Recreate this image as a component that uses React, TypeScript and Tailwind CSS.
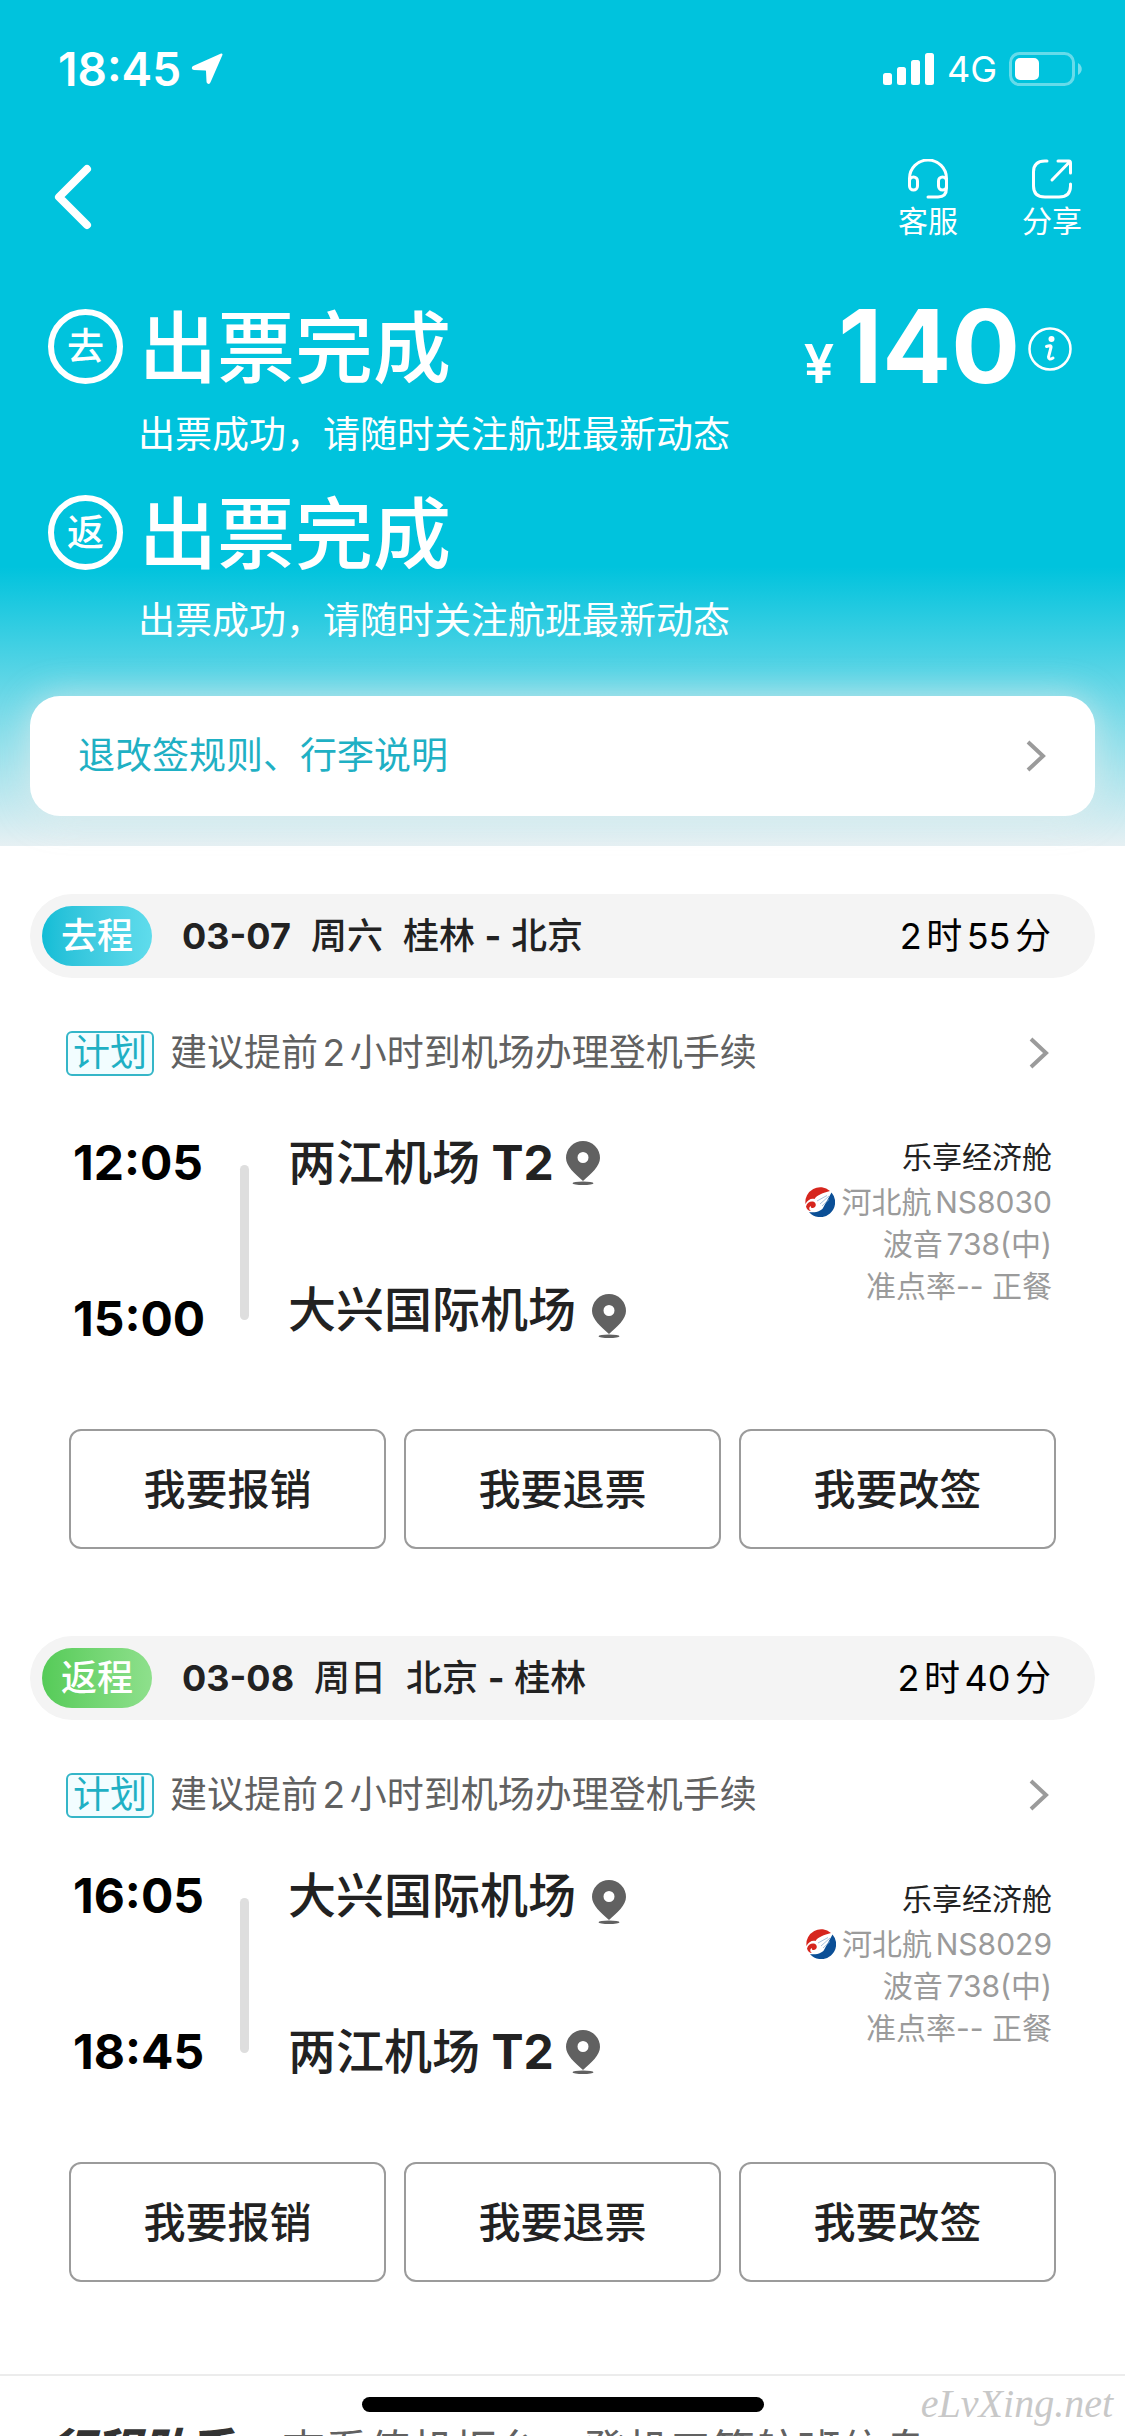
import React from 'react'
import clsx from 'clsx'

interface Airport {
    time: string
    name: string
    terminal?: string
}

interface Leg {
    id: string
    label: string
    badge: string
    date: string
    weekday: string
    cities: string[]
    duration: string
    flight: string
    from: Airport
    to: Airport
}

const LIANGJIANG = { name: '两江机场', terminal: 'T2' }
const DAXING = { name: '大兴国际机场' }

const legs: Leg[] = [
    {
        id: 'go',
        label: '去程',
        badge: 'bg-linear-to-r from-[#10bdd6] to-[#5fdcec]',
        date: '03-07',
        weekday: '周六',
        cities: ['桂林', '北京'],
        duration: '2时55分',
        flight: '河北航NS8030',
        from: { time: '12:05', ...LIANGJIANG },
        to: { time: '15:00', ...DAXING },
    },
    {
        id: 'back',
        label: '返程',
        badge: 'bg-linear-to-r from-[#55cb58] to-[#8ee08c]',
        date: '03-08',
        weekday: '周日',
        cities: ['北京', '桂林'],
        duration: '2时40分',
        flight: '河北航NS8029',
        from: { time: '16:05', ...DAXING },
        to: { time: '18:45', ...LIANGJIANG },
    },
]

const actions = ['我要报销', '我要退票', '我要改签']

const ChevronRight = () => (
    <svg width="20" height="32" viewBox="0 0 20 32" fill="none" stroke="#9b9b9b" strokeWidth="4">
        <path d="M2 2 L17 16 L2 30" />
    </svg>
)

const LocationArrow = () => (
    <svg width="32" height="32" viewBox="0 0 32 32" fill="#fff" stroke="#fff" strokeWidth="2" strokeLinejoin="round">
        <path d="M30.500 1.500 L18.500 29 C18 30.500 16.500 30 16.500 28.500 L16 18 C16 17 15.500 16.500 14.500 16.500 L3 16 C1.500 16 1.500 14.500 2.500 14 Z" />
    </svg>
)

const Signal = () => (
    <svg width="52" height="32" viewBox="0 0 52 32" fill="#fff">
        <rect x="0" y="20" width="9" height="12" rx="2.500" />
        <rect x="14" y="14" width="9" height="18" rx="2.500" />
        <rect x="28" y="7" width="9" height="25" rx="2.500" />
        <rect x="42" y="0" width="9" height="32" rx="2.500" />
    </svg>
)

const Battery = () => (
    <svg width="73" height="34" viewBox="0 0 73 34">
        <rect x="1.500" y="1.500" width="63" height="31" rx="9" fill="none" stroke="#fff" strokeOpacity="0.400" strokeWidth="3" />
        <rect x="6" y="6" width="24" height="22" rx="5" fill="#fff" />
        <path d="M69 11 C74 14 74 20 69 23 Z" fill="#fff" fillOpacity="0.450" />
    </svg>
)

const Headset = () => (
    <svg width="40" height="40" viewBox="0 0 40 40" fill="none" stroke="#fff" strokeWidth="3" strokeLinecap="round">
        <path d="M1.500 24 V19.500 A18.500 18.500 0 0 1 38.500 19.500 V29 Q38.500 38 30 38 H20" />
        <rect x="1.500" y="18" width="8" height="13" rx="4" />
        <rect x="30.500" y="18" width="8" height="13" rx="4" />
    </svg>
)

const Share = () => (
    <svg width="40" height="40" viewBox="0 0 40 40" fill="none" stroke="#fff" strokeWidth="3" strokeLinecap="round" strokeLinejoin="round">
        <path d="M15 2 H13 Q1.500 2 1.500 13 V27 Q1.500 38 13 38 H27 Q38.500 38 38.500 27 V25" />
        <path d="M26 2 H37 Q38.500 2 38.500 4 V14 M37.500 3 L20 21" />
    </svg>
)

const InfoIcon = () => (
    <svg width="44" height="44" viewBox="0 0 44 44" fill="none" stroke="#fff">
        <circle cx="22" cy="22" r="20.500" strokeWidth="2.500" />
        <circle cx="23.500" cy="12" r="3" fill="#fff" stroke="none" />
        <path d="M18.500 19.500 Q23.500 17.500 23 20.500 L20.500 30 Q20.500 33.500 25 31" strokeWidth="3" strokeLinecap="round" />
    </svg>
)

const Pin = () => (
    <svg width="34" height="44" viewBox="0 0 34 44" fill="#616161">
        <path fillRule="evenodd" d="M17 0 A17 17 0 0 1 34 17 C34 25 25 33 17 40 C9 33 0 25 0 17 A17 17 0 0 1 17 0 Z M17 11 A5.500 5.500 0 1 0 17 22 A5.500 5.500 0 1 0 17 11 Z" />
        <ellipse cx="17" cy="42.200" rx="10.500" ry="1.800" />
    </svg>
)

const AirlineLogo = () => (
    <svg width="30" height="30" viewBox="0 0 30 30">
        <path d="M26.500 5.500 A14.800 14.800 0 0 1 4 25 C11 26 17 24 18.500 20 Z" fill="#0b4f96" />
        <path d="M0.500 17 A14.800 14.800 0 0 1 25 4 C18 6 12 8 9.500 12 C6 11 2.500 13 0.500 17 Z" fill="#d6261e" />
        <path d="M1 19.500 C2 15.500 5 14 8 14.500 C11.500 15.500 12 20 8 21 C6.500 21.300 5.500 20.500 6 19 C3.500 20 4 23 6 24 C3.500 24 1.500 22 1 19.500 Z" fill="#d6261e" />
        <path d="M15 17 L24 9 M17 19 L24 12.500 M12 14 L22 8.500" fill="none" stroke="#8fb3d4" strokeWidth="0.800" />
    </svg>
)

const StatusBar = () => (
    <div className="flex h-[138px] items-center justify-between pl-[58px] pr-[43px]">
        <div className="flex items-center gap-[10px]">
            <span className="text-[46px] font-semibold">18:45</span>
            <LocationArrow />
        </div>
        <div className="flex items-center gap-3">
            <Signal />
            <span className="text-[36px]">4G</span>
            <Battery />
        </div>
    </div>
)

const NavBar = () => (
    <nav className="flex h-[118px] items-center justify-between pl-[54px] pr-[43px]">
        <button type="button" aria-label="返回">
            <svg width="38" height="66" viewBox="0 0 38 66" fill="none" stroke="#fff" strokeWidth="8" strokeLinecap="round" strokeLinejoin="round">
                <path d="M33 5 L5 33 L33 61" />
            </svg>
        </button>
        <div className="flex gap-16 pt-1">
            <button type="button" className="flex flex-col items-center gap-1 text-[30px] leading-9">
                <Headset />
                客服
            </button>
            <button type="button" className="flex flex-col items-center gap-1 text-[30px] leading-9">
                <Share />
                分享
            </button>
        </div>
    </nav>
)

interface TicketStatusProps {
    mark: string
    children?: React.ReactNode
}

const TicketStatus = ({ mark, children }: TicketStatusProps) => (
    <div>
        <div className="flex h-[75px] items-center pl-[48px] pr-[53px]">
            <span className="flex size-[75px] items-center justify-center rounded-full border-[6px] border-white text-[37px] font-medium">
                { mark }
            </span>
            <h2 className="ml-4 flex-1 pt-1 text-[78px] font-medium leading-[75px]">出票完成</h2>
            { children }
        </div>
        <p className="mt-6 pl-[138px] text-[37px] leading-[54px]">出票成功，请随时关注航班最新动态</p>
    </div>
)

const AirportName = ({ airport }: { airport: Airport }) => (
    <div className={clsx('flex h-[60px] items-center whitespace-nowrap', airport.terminal ? 'mt-[9px] gap-3' : 'gap-4')}>
        <span className="text-[48px] font-medium text-[#222]">
            { airport.name }
            { airport.terminal && <span className="font-bold"> { airport.terminal }</span> }
        </span>
        {/* sin terminal el pin baja un poco respecto al texto */}
        <span className={clsx(!airport.terminal && 'pt-3')}>
            <Pin />
        </span>
    </div>
)

const LegCard = ({ leg }: { leg: Leg }) => (
    <section>
        <header className="mx-[30px] flex h-[84px] items-center rounded-full bg-[#f4f4f4] pl-3 pr-[44px] text-[36px]">
            <span className={clsx('flex h-[60px] w-[110px] items-center justify-center rounded-full font-medium text-white', leg.badge)}>
                { leg.label }
            </span>
            <h3 className="ml-[30px] flex flex-1 gap-5 font-medium text-[#222]">
                <span className="font-bold">{ leg.date }</span>
                <span>{ leg.weekday }</span>
                <span>
                    { leg.cities[0] } <span className="font-bold">-</span> { leg.cities[1] }
                </span>
            </h3>
            <span className="[text-autospace:normal]">{ leg.duration }</span>
        </header>

        <button type="button" className="mt-12 flex h-[54px] w-full items-center pl-[66px] pr-[76px] text-[37px]">
            <span className="flex h-[45px] w-[88px] items-center justify-center rounded-md border-2 border-[#35b6c8] bg-[#f2fdff] text-[#1fb0c4]">
                计划
            </span>
            <span className="ml-4 flex-1 text-left text-[#616161] [text-autospace:normal]">建议提前2小时到机场办理登机手续</span>
            <ChevronRight />
        </button>

        <div className="mt-[44px] flex pl-[73px] pr-[73px]">
            <div className={clsx('flex h-[266px]', leg.from.terminal && 'mt-[9px]')}>
                <div className="flex h-[216px] w-[167px] flex-col justify-between text-[48px] font-bold leading-[60px]">
                    <time>{ leg.from.time }</time>
                    <time>{ leg.to.time }</time>
                </div>
                <div className="mt-8 h-[155px] w-[9px] rounded-full bg-[#dedede]" />
            </div>
            <div className="ml-[39px] flex flex-1 flex-col gap-[87px]">
                <AirportName airport={ leg.from } />
                <AirportName airport={ leg.to } />
            </div>
            <div className="mt-3 flex flex-col items-end text-[30px] leading-[42px] text-[#9b9b9b] [text-autospace:normal]">
                <span className="mb-[3px] text-[#222]">乐享经济舱</span>
                <span className="flex items-center gap-[6px]">
                    <AirlineLogo />
                    { leg.flight }
                </span>
                <span>波音738(中)</span>
                <span>准点率-- 正餐</span>
            </div>
        </div>

        <div className="mt-[30px] grid grid-cols-3 gap-[18px] px-[69px]">
            { actions.map( action => (
                <button
                    key={ action }
                    type="button"
                    className="h-[120px] rounded-xl border-2 border-[#9b9b9b] text-[42px] font-medium text-[#222]"
                >
                    { action }
                </button>
            )) }
        </div>
    </section>
)

export default function App() {
    return (
        <div className="relative h-screen overflow-hidden bg-white font-[Inter,'Noto_Sans_CJK_SC',sans-serif] text-black">
            <div className="bg-[linear-gradient(to_bottom,#00c3dd_67%,#e6f0f3_100%)] pb-[30px] text-white">
                <StatusBar />
                <NavBar />
                <div className="mt-[53px] flex flex-col gap-[33px]">
                    <TicketStatus mark="去">
                        <div className="flex items-center">
                            <span className="flex items-baseline gap-1 pt-4 font-bold leading-[75px]">
                                <span className="text-[54px] font-semibold">¥</span>
                                <span className="text-[102px]">140</span>
                            </span>
                            <button type="button" aria-label="价格明细" className="ml-2 pt-1">
                                <InfoIcon />
                            </button>
                        </div>
                    </TicketStatus>
                    <TicketStatus mark="返" />
                </div>
                <div className="mt-12 px-[30px]">
                    <button
                        type="button"
                        className="flex h-[120px] w-full items-center justify-between rounded-[30px] bg-white pl-12 pr-[49px] text-[37px] text-[#1fb0c4] shadow-[0_0_36px_rgba(230,236,236,0.7)]"
                    >
                        退改签规则、行李说明
                        <ChevronRight />
                    </button>
                </div>
            </div>

            <main className="flex flex-col gap-[87px] pt-12">
                { legs.map( leg => <LegCard key={ leg.id } leg={ leg } /> ) }
            </main>

            <footer className="mt-[92px] flex items-start gap-[50px] whitespace-nowrap border-t-2 border-[#ececec] pl-12 pt-[52px] leading-[44px]">
                <strong className="text-[46px] font-black italic text-[#333]">行程助手</strong>
                <span className="text-[43px] text-[#616161]">查看值机柜台、登机口等航班信息</span>
            </footer>

            {/* barra de inicio y marca de agua, por encima del contenido */}
            <div className="absolute bottom-6 left-1/2 h-[15px] w-[402px] -translate-x-1/2 rounded-full bg-black" />
            <span className="absolute bottom-2 right-3 font-['Liberation_Serif',serif] text-[40px] italic leading-[48px] text-[#c8c8c8]">
                eLvXing.net
            </span>
        </div>
    )
}
